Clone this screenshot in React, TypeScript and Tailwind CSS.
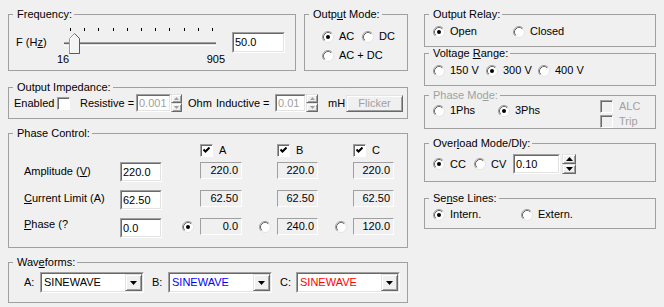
import React from "react";

const sunkOuter =
  "border border-t-[#a0a0a0] border-l-[#a0a0a0] border-r-white border-b-white";
const sunkInner =
  "border border-t-[#696969] border-l-[#696969] border-r-[#e3e3e3] border-b-[#e3e3e3]";
const raised =
  "border border-t-[#e3e3e3] border-l-[#e3e3e3] border-r-[#696969] border-b-[#696969] shadow-[inset_1px_1px_0_#ffffff,inset_-1px_-1px_0_#a0a0a0] bg-[#f0f0f0]";

type Kids = { children?: React.ReactNode };

function Group({
  title,
  className = "",
  disabled = false,
  children,
}: Kids & { title: React.ReactNode; className?: string; disabled?: boolean }) {
  return (
    <fieldset className={`border border-[#a0a0a0] min-w-0 ${className}`}>
      <legend
        className={`ml-[4px] pl-[4px] pr-[2px] leading-[13px] ${
          disabled ? "text-[#a0a0a0]" : ""
        }`}
      >
        {title}
      </legend>
      {children}
    </fieldset>
  );
}

function RadioDot({ checked = false }: { checked?: boolean }) {
  return (
    <svg width="12" height="12" viewBox="0 0 12 12" className="shrink-0">
      <circle cx="6" cy="6" r="5.5" fill="#fff" stroke="#e3e3e3" />
      <path d="M2.11 9.89 A5.5 5.5 0 0 1 9.89 2.11" fill="none" stroke="#a0a0a0" />
      <path d="M2.82 9.18 A4.5 4.5 0 0 1 9.18 2.82" fill="none" stroke="#696969" />
      {checked && <circle cx="6" cy="6" r="2" fill="#000" />}
    </svg>
  );
}

function Radio({
  checked = false,
  label,
  className = "",
}: {
  checked?: boolean;
  label?: React.ReactNode;
  className?: string;
}) {
  return (
    <div className={`flex items-center h-[13px] shrink-0 ${className}`}>
      <RadioDot checked={checked} />
      {label && <span className="ml-[5px] whitespace-nowrap">{label}</span>}
    </div>
  );
}

function Check({ checked = false, disabled = false }: { checked?: boolean; disabled?: boolean }) {
  return (
    <span
      className={`inline-flex shrink-0 w-[13px] h-[13px] items-center justify-center ${sunkOuter} shadow-[inset_1px_1px_0_#696969] ${
        disabled ? "bg-[#f0f0f0]" : "bg-white"
      }`}
    >
      {checked && (
        <svg width="7" height="7" viewBox="0 0 7 7">
          <path d="M0.5 2.5 L2.5 4.5 L6.5 0.5" fill="none" stroke="#000" strokeWidth="2" />
        </svg>
      )}
    </span>
  );
}

function CheckLabel({
  label,
  checked = false,
  disabled = false,
  className = "",
}: {
  label: string;
  checked?: boolean;
  disabled?: boolean;
  className?: string;
}) {
  return (
    <div className={`flex items-center h-[13px] ${className}`}>
      <Check checked={checked} disabled={disabled} />
      <span className={`ml-[6px] ${disabled ? "text-[#a0a0a0]" : ""}`}>{label}</span>
    </div>
  );
}

function Edit({
  value,
  className = "",
  disabled = false,
}: {
  value: string;
  className?: string;
  disabled?: boolean;
}) {
  return (
    <div className={`shrink-0 ${sunkOuter} ${className}`}>
      <div
        className={`h-full bg-white flex items-center pl-[1px] ${sunkInner} ${
          disabled ? "text-[#a0a0a0]" : ""
        }`}
      >
        {value}
      </div>
    </div>
  );
}

function Static({ value, className = "" }: { value: string; className?: string }) {
  return (
    <div
      className={`shrink-0 h-[17px] flex items-center justify-end pr-[3px] ${sunkOuter} ${className}`}
    >
      {value}
    </div>
  );
}

function Spin({ className = "", disabled = false }: { className?: string; disabled?: boolean }) {
  const c = disabled ? "#a0a0a0" : "#000";
  return (
    <div className={`shrink-0 flex flex-col ${className}`}>
      <div className={`flex-1 flex items-center justify-center ${raised}`}>
        {disabled ? (
          <svg width="5" height="3" viewBox="0 0 5 3">
            <path d="M2.5 0 L5 3 L0 3 Z" fill={c} />
          </svg>
        ) : (
          <svg width="7" height="4" viewBox="0 0 7 4">
            <path d="M3.5 0 L7 4 L0 4 Z" fill={c} />
          </svg>
        )}
      </div>
      <div className={`flex-1 flex items-center justify-center ${raised}`}>
        {disabled ? (
          <svg width="5" height="3" viewBox="0 0 5 3">
            <path d="M0 0 L5 0 L2.5 3 Z" fill={c} />
          </svg>
        ) : (
          <svg width="7" height="4" viewBox="0 0 7 4">
            <path d="M0 0 L7 0 L3.5 4 Z" fill={c} />
          </svg>
        )}
      </div>
    </div>
  );
}

function Combo({ text, color, className = "" }: { text: string; color: string; className?: string }) {
  return (
    <div className={`shrink-0 h-[21px] ${sunkOuter} ${className}`}>
      <div className={`h-full bg-white flex items-center ${sunkInner}`}>
        <span className={`flex-1 pl-[2px] ${color}`}>{text}</span>
        <div className={`w-[17px] h-full flex items-center justify-center ${raised}`}>
          <svg width="7" height="4" viewBox="0 0 7 4">
            <path d="M0 0 L7 0 L3.5 4 Z" fill="#000" />
          </svg>
        </div>
      </div>
    </div>
  );
}

function Slider() {
  const ticks = Array.from({ length: 11 }, (_, i) => Math.round(10 + i * 14.2) + 0.5);
  return (
    <svg width="172" height="30" viewBox="0 0 172 30">
      {ticks.map((x) => (
        <line key={x} x1={x} y1="2" x2={x} y2="5" stroke="#000" />
      ))}
      <rect x="4" y="16" width="152" height="1" fill="#a0a0a0" />
      <rect x="4" y="17" width="152" height="1" fill="#696969" />
      <rect x="4" y="18" width="152" height="1" fill="#e3e3e3" />
      <rect x="4" y="19" width="152" height="1" fill="#ffffff" />
      <path d="M9.5 27.5 V12.5 L14.5 7.5 L19.5 12.5 V27.5 Z" fill="#f4f4f4" stroke="#9a9a9a" />
      <path d="M10.5 26.5 V12.9 L14.5 8.9" fill="none" stroke="#ffffff" />
      <path d="M14.5 7.5 L19.5 12.5 V27.5 H9.5" fill="none" stroke="#5a5a5a" />
    </svg>
  );
}

function PhaseRow({
  label,
  labelClass,
  value,
  vals,
  radios,
}: {
  label: React.ReactNode;
  labelClass: string;
  value: string;
  vals: string[];
  radios?: boolean;
}) {
  return (
    <div className="flex items-start h-[20px] pl-[15px]">
      <span className={`w-[96px] shrink-0 ${labelClass}`}>{label}</span>
      <Edit className="w-[42px] h-[20px]" value={value} />
      <div className="w-[20px] shrink-0" />
      <div className="flex items-start w-[77px] shrink-0">
        <div className="w-[12px] mt-[3px]">{radios && <RadioDot checked />}</div>
        <Static className="ml-[6px] w-[42px]" value={vals[0]} />
      </div>
      <div className="flex items-start w-[76px] shrink-0">
        <div className="w-[12px] mt-[3px]">{radios && <RadioDot />}</div>
        <Static className="ml-[6px] w-[41px]" value={vals[1]} />
      </div>
      <div className="flex items-start shrink-0">
        <div className="w-[12px] mt-[3px]">{radios && <RadioDot />}</div>
        <Static className="ml-[6px] w-[41px]" value={vals[2]} />
      </div>
    </div>
  );
}

export default function App() {
  return (
    <div className="w-[664px] h-[307px] overflow-hidden bg-[#f0f0f0] text-black text-[11px] leading-[13px] [font-family:'Liberation_Sans',Arial,sans-serif] flex gap-[16px] pl-[8px] pt-[8px]">
      {/* left column */}
      <div className="flex flex-col w-[400px] shrink-0">
        <div className="flex gap-[8px]">
          <Group title="Frequency:" className="w-[288px] h-[63px]">
            <div className="flex items-start pl-[7px]">
              <span className="w-[44px] shrink-0 mt-[15px]">
                F (H<u>z</u>)
              </span>
              <div className="w-[172px] shrink-0 mt-[5px] flex flex-col">
                <Slider />
                <div className="flex justify-between w-[168px] -ml-[3px] -mt-[3px]">
                  <span>16</span>
                  <span>905</span>
                </div>
              </div>
              <Edit className="w-[53px] h-[21px] mt-[11px]" value="50.0" />
            </div>
          </Group>
          <Group
            title={
              <>
                Outp<u>u</u>t Mode:
              </>
            }
            className="w-[104px] h-[63px]"
          >
            <div className="flex flex-col pl-[17px] pt-[9px] gap-[6px]">
              <div className="flex">
                <Radio checked label="AC" className="w-[40px]" />
                <Radio label="DC" />
              </div>
              <Radio label="AC + DC" />
            </div>
          </Group>
        </div>

        <Group title="Output Impedance:" className="mt-[10px] h-[38px]">
          <div className="flex items-center h-[18px] pl-[5px] whitespace-nowrap">
            <span className="w-[43px] shrink-0">Enabled</span>
            <Check />
            <span className="ml-[10px] w-[56px] shrink-0">Resistive =</span>
            <Edit className="w-[35px] h-[18px]" value="0.001" disabled />
            <Spin className="w-[11px] h-[18px]" disabled />
            <span className="ml-[6px] w-[28px] shrink-0">Ohm</span>
            <span className="w-[59px] shrink-0">Inductive =</span>
            <Edit className="w-[31px] h-[18px]" value="0.01" disabled />
            <Spin className="w-[12px] h-[18px]" disabled />
            <span className="ml-[10px] w-[18px] shrink-0">mH</span>
            <button className={`w-[57px] h-[17px] shrink-0 text-[#a0a0a0] ${raised}`}>
              Flicker
            </button>
          </div>
        </Group>

        <Group title="Phase Control:" className="mt-[8px] h-[121px]">
          <div className="flex pl-[191px] mt-[4px]">
            <CheckLabel label="A" checked className="w-[77px]" />
            <CheckLabel label="B" checked className="w-[76px]" />
            <CheckLabel label="C" checked />
          </div>
          <div className="flex flex-col gap-[8px] mt-[5px]">
            <PhaseRow
              label={
                <>
                  Amplitude (<u>V</u>)
                </>
              }
              labelClass="mt-[3px]"
              value="220.0"
              vals={["220.0", "220.0", "220.0"]}
            />
            <PhaseRow
              label={
                <>
                  <u>C</u>urrent Limit (A)
                </>
              }
              labelClass="mt-[2px]"
              value="62.50"
              vals={["62.50", "62.50", "62.50"]}
            />
            <PhaseRow
              label={
                <>
                  <u>P</u>hase (?
                </>
              }
              labelClass="mt-0"
              value="0.0"
              vals={["0.0", "240.0", "120.0"]}
              radios
            />
          </div>
        </Group>

        <Group
          title={
            <>
              Wav<u>e</u>forms:
            </>
          }
          className="mt-[8px] h-[47px]"
        >
          <div className="flex items-center pl-[15px] mt-[3px] h-[21px]">
            <span className="w-[16px] shrink-0">A:</span>
            <Combo className="w-[104px]" text="SINEWAVE" color="text-black" />
            <span className="ml-[8px] w-[16px] shrink-0">B:</span>
            <Combo className="w-[104px]" text="SINEWAVE" color="text-[#0000ff]" />
            <span className="ml-[8px] w-[16px] shrink-0">C:</span>
            <Combo className="w-[104px]" text="SINEWAVE" color="text-[#ff0000]" />
          </div>
        </Group>
      </div>

      {/* right column */}
      <div className="flex flex-col w-[232px] shrink-0">
        <Group title="Output Relay:" className="h-[39px]">
          <div className="flex pl-[8px] mt-[4px]">
            <Radio checked label="Open" className="w-[80px]" />
            <Radio label="Closed" />
          </div>
        </Group>

        <Group
          title={
            <>
              Voltage <u>R</u>ange:
            </>
          }
          className="h-[39px]"
        >
          <div className="flex pl-[8px] mt-[4px]">
            <Radio label="150 V" className="w-[53px]" />
            <Radio checked label="300 V" className="w-[52px]" />
            <Radio label="400 V" />
          </div>
        </Group>

        <Group
          title={
            <>
              Phase Mo<u>d</u>e:
            </>
          }
          disabled
          className="mt-[3px] h-[40px]"
        >
          <div className="flex">
            <div className="flex pl-[8px] mt-[2px] w-[175px] shrink-0">
              <Radio label="1Phs" className="w-[65px]" />
              <Radio checked label="3Phs" />
            </div>
            <div className="flex flex-col -mt-[2px] gap-[2px]">
              <CheckLabel label="ALC" disabled />
              <CheckLabel label="Trip" disabled />
            </div>
          </div>
        </Group>

        <Group
          title={
            <>
              Over<u>l</u>oad Mode/Dly:
            </>
          }
          className="mt-[8px] h-[45px]"
        >
          <div className="flex items-center pl-[8px] mt-[4px] h-[20px]">
            <Radio checked label="CC" className="w-[41px]" />
            <Radio label="CV" className="w-[39px]" />
            <Edit className="w-[47px] h-[20px]" value="0.10" />
            <Spin className="ml-[2px] w-[14px] h-[20px]" />
          </div>
        </Group>

        <Group
          title={
            <>
              Se<u>n</u>se Lines:
            </>
          }
          className="mt-[10px] h-[37px]"
        >
          <div className="flex pl-[8px] mt-[3px]">
            <Radio checked label="Intern." className="w-[88px]" />
            <Radio label="Extern." />
          </div>
        </Group>
      </div>
    </div>
  );
}
